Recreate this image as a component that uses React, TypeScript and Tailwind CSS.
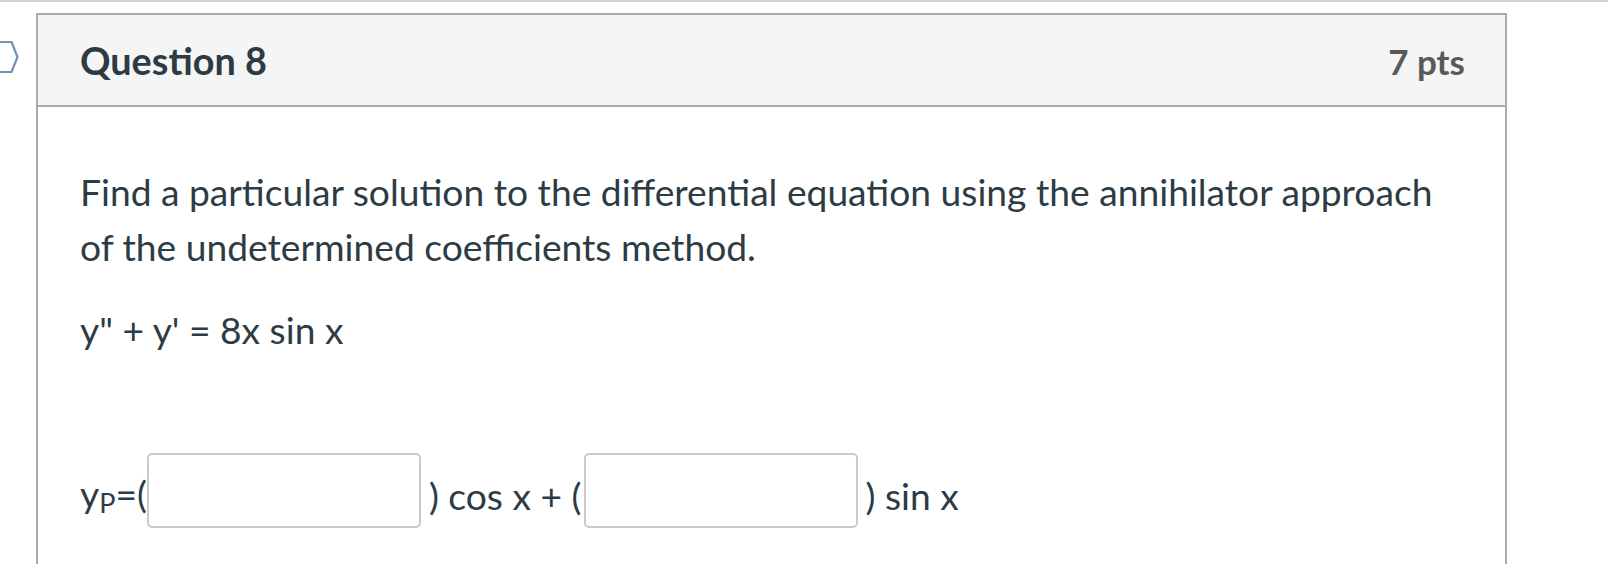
export default function App() {
  return (
    <div className="relative h-[564px] overflow-hidden bg-white font-['Lato','Open_Sans',sans-serif] text-[#2d3b45]">
      {/* top rule */}
      <div className="h-[2px] bg-[#d2d2d2]" />

      {/* question flag, mostly off-screen */}
      <svg className="absolute left-0 top-[40px]" width="20" height="34" viewBox="0 0 20 34">
        <path d="M-6 2 H11.5 L17.5 17 L11.5 32 H-6" fill="white" stroke="#7493b2" strokeWidth="2.2" strokeLinejoin="round" />
      </svg>

      {/* Question card */}
      <div className="ml-[36px] mt-[11px] w-[1471px] border-2 border-[#ababab]">
        <div className="flex h-[92px] items-center justify-between border-b-2 border-[#ababab] bg-[#f5f5f5] pl-[42px] pr-[40px] pt-[2px]">
          <h2 className="text-[37.8px] font-bold leading-none text-[#2d3b45]">Question 8</h2>
          <div className="text-[35px] font-bold leading-none text-[#595959]">7 pts</div>
        </div>

        <div className="px-[42px] pb-[80px] pt-[57px] text-[37.2px] leading-[55px]">
          <p>
            Find a particular solution to the differential equation using the annihilator approach of the
            undetermined coefficients method.
          </p>
          <p className="mt-[27.5px]">y&quot; + y' = 8x sin x</p>

          <div className="mt-[96.5px] flex items-center">
            <span className="pt-[9px]">
              y<span className="relative top-[5px] text-[27px]">P</span>=(
            </span>
            <input
              type="text"
              className="h-[75px] w-[274px] rounded-[5px] border-2 border-[#cacaca] bg-white outline-none"
            />
            <span className="ml-[8px] pt-[9px]">) cos x + (</span>
            <input
              type="text"
              className="ml-[2px] h-[75px] w-[274px] rounded-[5px] border-2 border-[#cacaca] bg-white outline-none"
            />
            <span className="ml-[8px] pt-[9px]">) sin x</span>
          </div>
        </div>
      </div>
    </div>
  );
}
